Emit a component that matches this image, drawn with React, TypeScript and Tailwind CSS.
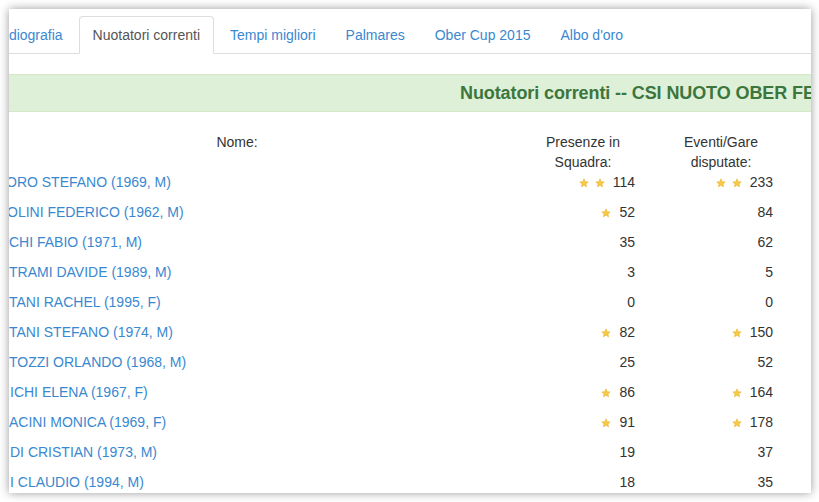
const tabs = ["Radiografia", "Nuotatori correnti", "Tempi migliori", "Palmares", "Ober Cup 2015", "Albo d'oro"];

const swimmers = [
  { name: "ORO STEFANO (1969, M)", shift: "ml-[-4px]", pres: 114, presStars: 2, events: 233, eventStars: 2 },
  { name: "OLINI FEDERICO (1962, M)", shift: "ml-[-3px]", pres: 52, presStars: 1, events: 84, eventStars: 0 },
  { name: "CHI FABIO (1971, M)", shift: "ml-[-1px]", pres: 35, presStars: 0, events: 62, eventStars: 0 },
  { name: "TRAMI DAVIDE (1989, M)", shift: "ml-[-1px]", pres: 3, presStars: 0, events: 5, eventStars: 0 },
  { name: "TANI RACHEL (1995, F)", shift: "ml-[-1px]", pres: 0, presStars: 0, events: 0, eventStars: 0 },
  { name: "TANI STEFANO (1974, M)", shift: "ml-[-1px]", pres: 82, presStars: 1, events: 150, eventStars: 1 },
  { name: "TOZZI ORLANDO (1968, M)", shift: "ml-[-1px]", pres: 25, presStars: 0, events: 52, eventStars: 0 },
  { name: "ICHI ELENA (1967, F)", shift: "ml-0", pres: 86, presStars: 1, events: 164, eventStars: 1 },
  { name: "ACINI MONICA (1969, F)", shift: "ml-[-1px]", pres: 91, presStars: 1, events: 178, eventStars: 1 },
  { name: "DI CRISTIAN (1973, M)", shift: "ml-0", pres: 19, presStars: 0, events: 37, eventStars: 0 },
  { name: "I CLAUDIO (1994, M)", shift: "ml-0", pres: 18, presStars: 0, events: 35, eventStars: 0 },
];

function Star() {
  return (
    <svg viewBox="0 0 24 24" className="w-[10px] h-[10px] mr-[6px] mt-[6px] shrink-0">
      <path
        d="M12 2l2.9 6.9 7.1.6-5.4 4.7 1.6 7-6.2-3.8-6.2 3.8 1.6-7L2 9.5l7.1-.6z"
        fill="#f7c948"
        stroke="#eab530"
        strokeWidth="1.5"
        strokeLinejoin="round"
      />
    </svg>
  );
}

function Count({ value, stars }: { value: number; stars: number }) {
  return (
    <div className="flex justify-end pr-[17px] h-[30px] text-[#333]">
      {Array.from({ length: stars }).map((_, i) => (
        <Star key={i} />
      ))}
      <span className="ml-[2px]">{value}</span>
    </div>
  );
}

export default function App() {
  return (
    <div
      className="w-[819px] h-[502px] bg-white pt-[9px] pl-[9px] text-[14px] leading-[20px]"
      style={{ fontFamily: '"Liberation Sans", Arial, sans-serif' }}
    >
      <div className="w-[802px] h-[484px] bg-white overflow-hidden shadow-[0_0_9px_rgba(0,0,0,0.4)]">
        <div className="w-[1100px] ml-[-49px]">
          <ul className="flex border-b border-[#ddd] mt-[7px] pl-[17px]">
            {tabs.map((tab) => {
              const active = tab === "Nuotatori correnti";
              return (
                <li
                  key={tab}
                  className={
                    active
                      ? "h-[38px] -mb-px px-[13px] mr-[2px] flex items-center border border-[#ddd] border-b-white rounded-t-[4px] bg-white text-[#555]"
                      : "h-[38px] -mb-px px-[13px] mr-[2px] flex items-center border border-transparent text-[#3a88d0]"
                  }
                >
                  {tab}
                </li>
              );
            })}
          </ul>

          <div className="mt-[20px] h-[38px] border-y border-[#d6e9c6] bg-[#dff0d8] flex items-center pl-[500px]">
            <h4 className="text-[18px] font-bold text-[#3c763d] whitespace-nowrap tracking-[-0.1px]">
              Nuotatori correnti -- CSI NUOTO OBER FERRARA
            </h4>
          </div>

          <div className="mt-[20px] grid grid-cols-[554px_138px_138px]">
            <div className="text-center text-[#333]">Nome:</div>
            <div className="text-center text-[#333]">
              Presenze in
              <br />
              Squadra:
            </div>
            <div className="text-center text-[#333]">
              Eventi/Gare
              <br />
              disputate:
            </div>

            {swimmers.map((s) => (
              <div key={s.name} className="contents">
                <div className="h-[30px] pl-[50px] whitespace-nowrap">
                  <span className={`${s.shift} inline-block text-[#3a88d0]`}>{s.name}</span>
                </div>
                <Count value={s.pres} stars={s.presStars} />
                <Count value={s.events} stars={s.eventStars} />
              </div>
            ))}
          </div>
        </div>
      </div>
    </div>
  );
}
